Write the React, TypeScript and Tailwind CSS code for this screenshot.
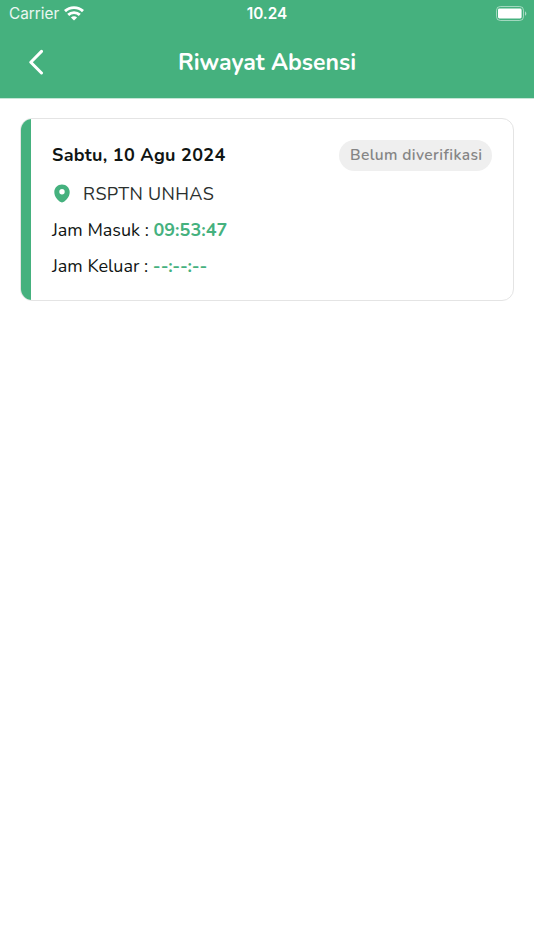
import { FC } from "react";

type AbsensiType = {
    tanggal: string;
    lokasi: string;
    jamMasuk: string;
    jamKeluar: string;
    status: string;
}

const riwayat: AbsensiType[] = [
    {
        tanggal: "Sabtu, 10 Agu 2024",
        lokasi: "RSPTN UNHAS",
        jamMasuk: "09:53:47",
        jamKeluar: "--:--:--",
        status: "Belum diverifikasi",
    },
];

const WifiIcon = () => (
    <svg width="20" height="15" viewBox="0 0 20 15" fill="none" stroke="white" strokeWidth="2.9">
        <path d="M1 5.1C6 0.4 14 0.4 19 5.1" />
        <path d="M4.2 8.9C7.4 5.9 12.6 5.9 15.8 8.9" />
        <path d="M10 14.4L6.9 11.5C8.6 9.9 11.4 9.9 13.1 11.5Z" fill="white" stroke="none" />
    </svg>
);

const BatteryIcon = () => (
    <svg width="31" height="15" viewBox="0 0 31 15" fill="none">
        <rect x="0.5" y="0.5" width="27" height="14" rx="3.8" stroke="white" strokeOpacity="0.5" />
        <rect x="2" y="2.6" width="23.6" height="9.8" rx="1.4" fill="white" />
        <path d="M29 5.2C30.8 6 30.8 9 29 9.8Z" fill="white" fillOpacity="0.55" />
    </svg>
);

const PinIcon = () => (
    <svg className="-mt-[2px]" width="16" height="19" viewBox="0 0 16 19" fill="#45b17e">
        <path fillRule="evenodd" d="M8 0.4C3.6 0.4 0.3 3.8 0.3 8C0.3 12.8 4 16.6 6.6 18.1C7.5 18.6 8.5 18.6 9.4 18.1C12 16.6 15.7 12.8 15.7 8C15.7 3.8 12.4 0.4 8 0.4ZM8 10.4A2.7 2.7 0 1 0 8 5A2.7 2.7 0 0 0 8 10.4Z" />
    </svg>
);

const AbsensiCard: FC<{ data: AbsensiType }> = ({ data }) => {
    return (
        <div className="flex h-[183px] overflow-hidden rounded-[12px] border-[1.5px] border-[#e4e4e4] bg-white text-[18px] text-[#101513]">
            <div className="w-[10px] shrink-0 bg-[#45b17e]" />
            <div className="flex flex-1 flex-col pl-[21px] pr-[21px] pt-[20.5px]">
                {/* TANGGAL, STATUS */}
                <div className="flex h-[31px] items-center justify-between">
                    <p className="font-bold leading-[30px] tracking-[0.32px]">{data.tanggal}</p>
                    <span className="flex h-[31px] items-center rounded-full bg-[#efefef] pl-[11px] pr-[9.5px] pb-px text-[15.5px] font-[650] leading-[30px] tracking-[0.4px] text-[#858585]">
                        {data.status}
                    </span>
                </div>
                {/* LOKASI */}
                <div className="mt-[11.5px] flex h-6 items-center gap-[13px] pl-[2px]">
                    <PinIcon />
                    <p className="leading-6 tracking-[0.36px] text-[#2a2f2d]">{data.lokasi}</p>
                </div>
                {/* JAM */}
                <p className="mt-3 leading-6">
                    <span>Jam Masuk : </span>
                    <span className="font-bold text-[#45b17e]">{data.jamMasuk}</span>
                </p>
                <p className="mt-3 leading-6">
                    <span>Jam Keluar : </span>
                    <span className="font-bold text-[#45b17e]">{data.jamKeluar}</span>
                </p>
            </div>
        </div>
    )
}

const App = () => {
    return (
        <div className="min-h-screen bg-white font-['Nunito','Lato',sans-serif]">
            <header className="h-[99px] border-b border-[#c5e6d6] bg-[#45b17e] text-white">
                {/* STATUS BAR */}
                <div className="grid h-[27px] grid-cols-3 items-center pl-[9px] pr-[7px] font-['Inter',sans-serif] text-[15.3px]">
                    <div className="flex items-center gap-[5px]">
                        <span className="pt-[2px] text-white/90">Carrier</span>
                        <WifiIcon />
                    </div>
                    <span className="-ml-[2px] pt-[2px] text-center font-semibold">10.24</span>
                    <div className="flex justify-end">
                        <BatteryIcon />
                    </div>
                </div>
                {/* TITLE */}
                <div className="grid h-[70px] grid-cols-[60px_1fr_60px] items-center">
                    <svg className="ml-[28px]" width="16" height="26" viewBox="0 0 16 26" fill="none" stroke="white" strokeWidth="3" strokeLinecap="round" strokeLinejoin="round">
                        <path d="M13.5 2.4L2.8 13.2L13.5 24" />
                    </svg>
                    <h1 className="pt-px text-center text-[23px] font-bold leading-[30px]">Riwayat Absensi</h1>
                </div>
            </header>
            <main className="flex flex-col gap-4 px-5 pt-[19px]">
                {riwayat.map((item) => (
                    <AbsensiCard key={item.tanggal} data={item} />
                ))}
            </main>
        </div>
    )
}

export default App
